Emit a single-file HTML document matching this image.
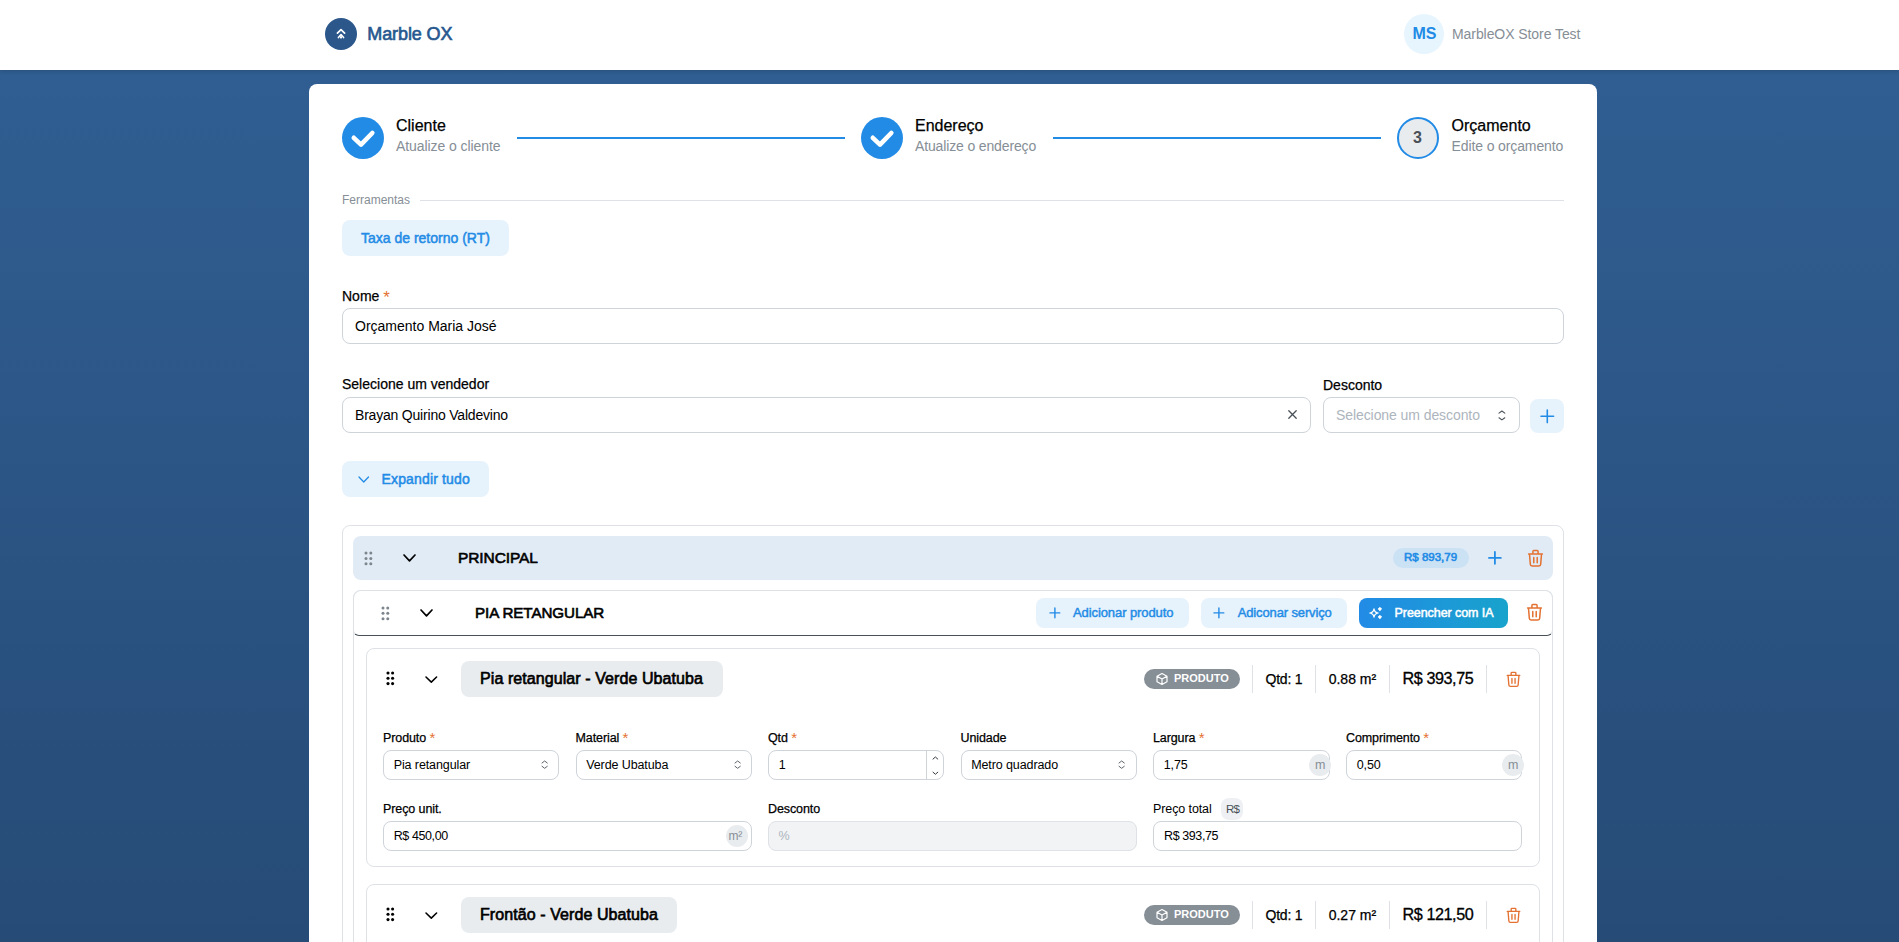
<!DOCTYPE html><html><head><meta charset="utf-8"><style>
html,body{margin:0;padding:0;}
body{width:1899px;height:942px;overflow:hidden;position:relative;font-family:"Liberation Sans",sans-serif;
background:linear-gradient(180deg,#305e92 0px,#305e92 70px,#264b76 942px);}
.t{position:absolute;white-space:nowrap;line-height:1;}
.b{position:absolute;display:block;}
</style></head><body>
<div class="b" style="left:0px;top:0px;width:1899px;height:70px;background:#fff;box-shadow:0 1px 4px rgba(0,0,0,0.18);"></div>
<div class="b" style="left:325px;top:18px;width:32px;height:32px;border-radius:50%;background:#2b578b;"></div>
<svg class="b" style="left:325px;top:18px;" width="32" height="32" viewBox="0 0 32 32" fill="none"><path d="M12.4 15.2 L16 11.6 L19.6 15.2" stroke="#fff" stroke-width="1.7" stroke-linecap="round" stroke-linejoin="round"/><path d="M13.4 19.6 L16 16.6 L18.6 19.6" stroke="#fff" stroke-width="1.6" stroke-linecap="round" stroke-linejoin="round"/><rect x="15" y="18.2" width="2" height="2.2" fill="#fff"/></svg>
<div class="t" style="left:367.30px;top:25.00px;font-size:18px;color:#27588f;letter-spacing:-0.1px;-webkit-text-stroke:0.65px #27588f;">Marble OX</div>
<div class="b" style="left:1404px;top:14px;width:40px;height:40px;border-radius:50%;background:#e7f5ff;"></div>
<div class="t" style="left:1412.50px;top:26.10px;font-size:16px;color:#228be6;font-weight:700;letter-spacing:-0.2px;">MS</div>
<div class="t" style="left:1452.00px;top:26.90px;font-size:14px;color:#868e96;letter-spacing:-0.07px;">MarbleOX Store Test</div>
<div class="b" style="left:309px;top:84px;width:1288px;height:900px;background:#fff;border-radius:8px;"></div>
<div class="b" style="left:342px;top:117px;width:42px;height:42px;border-radius:50%;background:#228be6;"></div>
<svg class="b" style="left:342px;top:117px;" width="42" height="42" viewBox="0 0 42 42" fill="none"><path d="M11.8 20.8 L19 27.6 L30.3 16" stroke="#fff" stroke-width="4.6" stroke-linecap="round" stroke-linejoin="round"/></svg>
<div class="t" style="left:396.00px;top:117.50px;font-size:16px;color:#000;-webkit-text-stroke:0.25px #000;">Cliente</div>
<div class="t" style="left:396.00px;top:139.00px;font-size:14px;color:#868e96;letter-spacing:-0.07px;">Atualize o cliente</div>
<div class="b" style="left:517px;top:137px;width:328px;height:2px;background:#228be6;"></div>
<div class="b" style="left:861px;top:117px;width:42px;height:42px;border-radius:50%;background:#228be6;"></div>
<svg class="b" style="left:861px;top:117px;" width="42" height="42" viewBox="0 0 42 42" fill="none"><path d="M11.8 20.8 L19 27.6 L30.3 16" stroke="#fff" stroke-width="4.6" stroke-linecap="round" stroke-linejoin="round"/></svg>
<div class="t" style="left:915.00px;top:117.50px;font-size:16px;color:#000;-webkit-text-stroke:0.25px #000;">Endereço</div>
<div class="t" style="left:915.00px;top:139.00px;font-size:14px;color:#868e96;letter-spacing:-0.14px;">Atualize o endereço</div>
<div class="b" style="left:1053px;top:137px;width:328px;height:2px;background:#228be6;"></div>
<div class="b" style="left:1397px;top:117px;width:42px;height:42px;box-sizing:border-box;border-radius:50%;border:2px solid #228be6;background:#e9ecef;"></div>
<div class="t" style="left:1413.00px;top:129.70px;font-size:16px;color:#495057;font-weight:700;">3</div>
<div class="t" style="left:1451.60px;top:117.50px;font-size:16px;color:#000;-webkit-text-stroke:0.25px #000;">Orçamento</div>
<div class="t" style="left:1451.60px;top:139.00px;font-size:14px;color:#868e96;letter-spacing:-0.12px;">Edite o orçamento</div>
<div class="t" style="left:342.00px;top:194.00px;font-size:12px;color:#868e96;">Ferramentas</div>
<div class="b" style="left:420px;top:200px;width:1144px;height:1px;background:#dee2e6;"></div>
<div class="b" style="left:342px;top:220px;width:167px;height:36px;background:#e7f3fc;border-radius:8px;"></div>
<div class="t" style="left:361.00px;top:231.00px;font-size:14px;color:#228be6;-webkit-text-stroke:0.5px #228be6;">Taxa de retorno (RT)</div>
<div class="t" style="left:342.00px;top:289.00px;font-size:14px;color:#000;-webkit-text-stroke:0.25px #000;">Nome <span style="color:#e47232;-webkit-text-stroke:0;font-size:17px;line-height:0;position:relative;top:2.3px">*</span></div>
<div class="b" style="left:342px;top:308px;width:1222px;height:36px;box-sizing:border-box;border:1px solid #ced4da;border-radius:8px;background:#fff;"></div>
<div class="t" style="left:355.00px;top:319.00px;font-size:14px;color:#000;">Orçamento Maria José</div>
<div class="t" style="left:342.00px;top:377.20px;font-size:14px;color:#000;-webkit-text-stroke:0.25px #000;">Selecione um vendedor</div>
<div class="b" style="left:342px;top:397px;width:969px;height:36px;box-sizing:border-box;border:1px solid #ced4da;border-radius:8px;background:#fff;"></div>
<div class="t" style="left:355.00px;top:407.70px;font-size:14px;color:#000;letter-spacing:-0.2px;">Brayan Quirino Valdevino</div>
<svg class="b" style="left:1286px;top:408px;" width="13" height="13" viewBox="0 0 13 13" fill="none"><path d="M2.8 2.8 L10.2 10.2 M10.2 2.8 L2.8 10.2" stroke="#495057" stroke-width="1.3" stroke-linecap="round"/></svg>
<div class="t" style="left:1323.00px;top:377.50px;font-size:14px;color:#000;-webkit-text-stroke:0.25px #000;">Desconto</div>
<div class="b" style="left:1323px;top:397px;width:197px;height:36px;box-sizing:border-box;border:1px solid #ced4da;border-radius:8px;background:#fff;"></div>
<div class="t" style="left:1336.00px;top:408.00px;font-size:14px;color:#adb5bd;letter-spacing:-0.08px;">Selecione um desconto</div>
<svg class="b" style="left:1497.3px;top:408.6px;" width="9.8" height="12.9" viewBox="0 0 9.8 12.9" fill="none"><path d="M2 4.1 L4.9 2 L7.8 4.1 M2 8.8 L4.9 10.9 L7.8 8.8" stroke="#495057" stroke-width="1.1" stroke-linecap="round" stroke-linejoin="round"/></svg>
<div class="b" style="left:1530px;top:399px;width:34px;height:34px;background:#e7f3fc;border-radius:8px;"></div>
<svg class="b" style="left:1539px;top:408px;" width="16.6" height="16.6" viewBox="0 0 16.6 16.6" fill="none"><path d="M8.3 2 V14.6 M2 8.3 H14.6" stroke="#228be6" stroke-width="1.6" stroke-linecap="round"/></svg>
<div class="b" style="left:342px;top:461px;width:147px;height:36px;background:#e7f3fc;border-radius:8px;"></div>
<svg class="b" style="left:356.5px;top:474.5px;" width="13.5" height="9" viewBox="0 0 13.5 9" fill="none"><path d="M2 2 L6.75 7 L11.5 2" stroke="#228be6" stroke-width="1.3" stroke-linecap="round" stroke-linejoin="round"/></svg>
<div class="t" style="left:381.50px;top:472.20px;font-size:14px;color:#228be6;letter-spacing:0.15px;-webkit-text-stroke:0.5px #228be6;">Expandir tudo</div>
<div class="b" style="left:342px;top:525px;width:1222px;height:600px;box-sizing:border-box;border:1px solid #dee2e6;border-radius:8px;"></div>
<div class="b" style="left:353px;top:536px;width:1200px;height:44px;background:#e0ebf5;border-radius:8px;"></div>
<svg class="b" style="left:363.5px;top:550.6px;" width="12" height="16" viewBox="0 0 12 16" fill="none"><circle cx="2.00" cy="2.00" r="1.5" fill="#7d858d"/><circle cx="2.00" cy="7.40" r="1.5" fill="#7d858d"/><circle cx="2.00" cy="12.80" r="1.5" fill="#7d858d"/><circle cx="6.80" cy="2.00" r="1.5" fill="#7d858d"/><circle cx="6.80" cy="7.40" r="1.5" fill="#7d858d"/><circle cx="6.80" cy="12.80" r="1.5" fill="#7d858d"/></svg>
<svg class="b" style="left:401.5px;top:553px;" width="15" height="9.8" viewBox="0 0 15 9.8" fill="none"><path d="M2 2 L7.5 7.8 L13 2" stroke="#000" stroke-width="1.7" stroke-linecap="round" stroke-linejoin="round"/></svg>
<div class="t" style="left:458.00px;top:549.75px;font-size:15.5px;color:#000;letter-spacing:-0.1px;-webkit-text-stroke:0.6px #000;">PRINCIPAL</div>
<div class="b" style="left:1393px;top:548px;width:76px;height:20px;background:#cbe1f4;border-radius:10px;"></div>
<div class="t" style="left:1404.00px;top:551.55px;font-size:11.5px;color:#228be6;-webkit-text-stroke:0.6px #228be6;">R$ 893,79</div>
<svg class="b" style="left:1487.2px;top:550px;" width="15.8" height="15.8" viewBox="0 0 15.8 15.8" fill="none"><path d="M7.9 2 V13.8 M2 7.9 H13.8" stroke="#228be6" stroke-width="1.8" stroke-linecap="round"/></svg>
<svg class="b" style="left:1524.7px;top:547.9166666666666px;" width="21.0" height="20.666666666666668" viewBox="0 0 24 24" fill="none"><g stroke="#e47232" stroke-width="1.75" stroke-linecap="round" stroke-linejoin="round"><path d="M4 7h16M10 11v6M14 11v6M5 7l1 12a2 2 0 0 0 2 2h8a2 2 0 0 0 2 -2l1 -12M9 7v-3a1 1 0 0 1 1 -1h4a1 1 0 0 1 1 1v3"/></g></svg>
<div class="b" style="left:353px;top:590px;width:1200px;height:600px;box-sizing:border-box;border:1px solid #dee2e6;border-radius:8px;"></div>
<div class="b" style="left:353px;top:590px;width:1200px;height:46px;box-sizing:border-box;border:1px solid #dee2e6;border-bottom:1px solid #495057;border-radius:8px 8px 6px 6px;background:#fff;"></div>
<svg class="b" style="left:380.6px;top:605.6px;" width="12" height="16" viewBox="0 0 12 16" fill="none"><circle cx="2.00" cy="2.00" r="1.5" fill="#7d858d"/><circle cx="2.00" cy="7.35" r="1.5" fill="#7d858d"/><circle cx="2.00" cy="12.70" r="1.5" fill="#7d858d"/><circle cx="6.75" cy="2.00" r="1.5" fill="#7d858d"/><circle cx="6.75" cy="7.35" r="1.5" fill="#7d858d"/><circle cx="6.75" cy="12.70" r="1.5" fill="#7d858d"/></svg>
<svg class="b" style="left:418.8px;top:608px;" width="15" height="9.8" viewBox="0 0 15 9.8" fill="none"><path d="M2 2 L7.5 7.8 L13 2" stroke="#000" stroke-width="1.7" stroke-linecap="round" stroke-linejoin="round"/></svg>
<div class="t" style="left:475.00px;top:604.90px;font-size:15.2px;color:#000;letter-spacing:-0.1px;-webkit-text-stroke:0.6px #000;">PIA RETANGULAR</div>
<div class="b" style="left:1036px;top:598px;width:153px;height:30px;background:#e7f3fc;border-radius:8px;"></div>
<svg class="b" style="left:1048px;top:606.2px;" width="13.8" height="13.8" viewBox="0 0 13.8 13.8" fill="none"><path d="M6.9 2 V11.8 M2 6.9 H11.8" stroke="#228be6" stroke-width="1.4" stroke-linecap="round"/></svg>
<div class="t" style="left:1073.00px;top:606.30px;font-size:13px;color:#228be6;letter-spacing:-0.09px;-webkit-text-stroke:0.45px #228be6;">Adicionar produto</div>
<div class="b" style="left:1201px;top:598px;width:146px;height:30px;background:#e7f3fc;border-radius:8px;"></div>
<svg class="b" style="left:1212px;top:606.2px;" width="13.8" height="13.8" viewBox="0 0 13.8 13.8" fill="none"><path d="M6.9 2 V11.8 M2 6.9 H11.8" stroke="#228be6" stroke-width="1.4" stroke-linecap="round"/></svg>
<div class="t" style="left:1237.70px;top:606.30px;font-size:13px;color:#228be6;letter-spacing:-0.13px;-webkit-text-stroke:0.45px #228be6;">Adiconar serviço</div>
<div class="b" style="left:1359px;top:598px;width:149px;height:30px;background:linear-gradient(90deg,#228be6,#18a3cc);border-radius:8px;"></div>
<svg class="b" style="left:1365px;top:600px;" width="30" height="26" viewBox="0 0 30 26" fill="none"><path d="M9 8.8 Q9.5 12.5 13.2 13 Q9.5 13.5 9 17.2 Q8.5 13.5 4.8 13 Q8.5 12.5 9 8.8Z" stroke="#fff" stroke-width="1.25" stroke-linejoin="round" fill="none"/><path d="M14.9 7.3 L16.6 9 L14.9 10.7 L13.2 9Z M14.9 15.3 L16.6 17 L14.9 18.7 L13.2 17Z" fill="#fff" stroke="#fff" stroke-width="0.9" stroke-linejoin="round"/></svg>
<div class="t" style="left:1394.60px;top:606.75px;font-size:12.5px;color:#fff;letter-spacing:-0.07px;-webkit-text-stroke:0.5px #fff;">Preencher com IA</div>
<svg class="b" style="left:1523.5px;top:602.4166666666666px;" width="21.0" height="20.666666666666668" viewBox="0 0 24 24" fill="none"><g stroke="#e47232" stroke-width="1.75" stroke-linecap="round" stroke-linejoin="round"><path d="M4 7h16M10 11v6M14 11v6M5 7l1 12a2 2 0 0 0 2 2h8a2 2 0 0 0 2 -2l1 -12M9 7v-3a1 1 0 0 1 1 -1h4a1 1 0 0 1 1 1v3"/></g></svg>
<div class="b" style="left:366px;top:648px;width:1174px;height:219px;box-sizing:border-box;border:1px solid #dee2e6;border-radius:8px;background:#fff;"></div>
<svg class="b" style="left:385.6px;top:671.4px;" width="12" height="16" viewBox="0 0 12 16" fill="none"><circle cx="2.00" cy="2.00" r="1.55" fill="#000"/><circle cx="2.00" cy="7.30" r="1.55" fill="#000"/><circle cx="2.00" cy="12.60" r="1.55" fill="#000"/><circle cx="6.60" cy="2.00" r="1.55" fill="#000"/><circle cx="6.60" cy="7.30" r="1.55" fill="#000"/><circle cx="6.60" cy="12.60" r="1.55" fill="#000"/></svg>
<svg class="b" style="left:424px;top:674.5px;" width="14.6" height="9.1" viewBox="0 0 14.6 9.1" fill="none"><path d="M2 2 L7.3 7.1 L12.6 2" stroke="#000" stroke-width="1.55" stroke-linecap="round" stroke-linejoin="round"/></svg>
<div class="b" style="left:461px;top:661px;width:262px;height:36px;background:#e9ecef;border-radius:8px;"></div>
<div class="t" style="left:480.00px;top:670.50px;font-size:16px;color:#000;letter-spacing:0.08px;-webkit-text-stroke:0.65px #000;">Pia retangular - Verde Ubatuba</div>
<div class="b" style="left:1144px;top:669px;width:96px;height:20px;background:#868e96;border-radius:10px;"></div>
<svg class="b" style="left:1155px;top:672px;" width="14" height="14" viewBox="0 0 14 14" fill="none"><g stroke="#fff" stroke-width="1.2" stroke-linejoin="round" stroke-linecap="round"><path d="M7 1.5 L12 4.2 V9.8 L7 12.5 L2 9.8 V4.2 Z M2 4.2 L7 7 L12 4.2 M7 7 V12.5"/></g></svg>
<div class="t" style="left:1174.00px;top:672.90px;font-size:11px;color:#fff;font-weight:700;">PRODUTO</div>
<div class="b" style="left:1252.2px;top:665px;width:1px;height:28px;background:#dee2e6;"></div>
<div class="b" style="left:1315.0px;top:665px;width:1px;height:28px;background:#dee2e6;"></div>
<div class="b" style="left:1389.2px;top:665px;width:1px;height:28px;background:#dee2e6;"></div>
<div class="b" style="left:1486.0px;top:665px;width:1px;height:28px;background:#dee2e6;"></div>
<div class="t" style="left:1265.60px;top:671.50px;font-size:14px;color:#000;letter-spacing:-0.25px;-webkit-text-stroke:0.25px #000;">Qtd: 1</div>
<div class="t" style="left:1328.70px;top:671.50px;font-size:14px;color:#000;-webkit-text-stroke:0.25px #000;">0.88 m²</div>
<div class="t" style="left:1402.60px;top:670.10px;font-size:16.2px;color:#000;letter-spacing:-0.45px;-webkit-text-stroke:0.3px #000;">R$ 393,75</div>
<svg class="b" style="left:1502.5px;top:670.0666666666666px;" width="21.0" height="18.666666666666668" viewBox="0 0 24 24" fill="none"><g stroke="#e47232" stroke-width="1.75" stroke-linecap="round" stroke-linejoin="round"><path d="M4 7h16M10 11v6M14 11v6M5 7l1 12a2 2 0 0 0 2 2h8a2 2 0 0 0 2 -2l1 -12M9 7v-3a1 1 0 0 1 1 -1h4a1 1 0 0 1 1 1v3"/></g></svg>
<div class="t" style="left:383.00px;top:732.05px;font-size:12.5px;color:#000;letter-spacing:-0.1px;-webkit-text-stroke:0.25px #000;">Produto <span style="color:#e47232;-webkit-text-stroke:0;font-size:15px;line-height:0;position:relative;top:1.2px">*</span></div>
<div class="b" style="left:383px;top:750px;width:176px;height:30px;box-sizing:border-box;border:1px solid #ced4da;border-radius:8px;background:#fff;"></div>
<div class="t" style="left:575.50px;top:732.05px;font-size:12.5px;color:#000;letter-spacing:-0.1px;-webkit-text-stroke:0.25px #000;">Material <span style="color:#e47232;-webkit-text-stroke:0;font-size:15px;line-height:0;position:relative;top:1.2px">*</span></div>
<div class="b" style="left:575.5px;top:750px;width:176.5px;height:30px;box-sizing:border-box;border:1px solid #ced4da;border-radius:8px;background:#fff;"></div>
<div class="t" style="left:768.00px;top:732.05px;font-size:12.5px;color:#000;letter-spacing:-0.1px;-webkit-text-stroke:0.25px #000;">Qtd <span style="color:#e47232;-webkit-text-stroke:0;font-size:15px;line-height:0;position:relative;top:1.2px">*</span></div>
<div class="b" style="left:768px;top:750px;width:175.5px;height:30px;box-sizing:border-box;border:1px solid #ced4da;border-radius:8px;background:#fff;"></div>
<div class="t" style="left:960.50px;top:732.05px;font-size:12.5px;color:#000;letter-spacing:-0.1px;-webkit-text-stroke:0.25px #000;">Unidade</div>
<div class="b" style="left:960.5px;top:750px;width:176.0px;height:30px;box-sizing:border-box;border:1px solid #ced4da;border-radius:8px;background:#fff;"></div>
<div class="t" style="left:1153.00px;top:732.05px;font-size:12.5px;color:#000;letter-spacing:-0.1px;-webkit-text-stroke:0.25px #000;">Largura <span style="color:#e47232;-webkit-text-stroke:0;font-size:15px;line-height:0;position:relative;top:1.2px">*</span></div>
<div class="b" style="left:1153px;top:750px;width:177px;height:30px;box-sizing:border-box;border:1px solid #ced4da;border-radius:8px;background:#fff;"></div>
<div class="t" style="left:1346.00px;top:732.05px;font-size:12.5px;color:#000;letter-spacing:-0.1px;-webkit-text-stroke:0.25px #000;">Comprimento <span style="color:#e47232;-webkit-text-stroke:0;font-size:15px;line-height:0;position:relative;top:1.2px">*</span></div>
<div class="b" style="left:1346px;top:750px;width:176px;height:30px;box-sizing:border-box;border:1px solid #ced4da;border-radius:8px;background:#fff;"></div>
<div class="t" style="left:393.70px;top:759.15px;font-size:12.5px;color:#000;letter-spacing:-0.1px;">Pia retangular</div>
<div class="t" style="left:586.20px;top:759.15px;font-size:12.5px;color:#000;letter-spacing:-0.1px;">Verde Ubatuba</div>
<div class="t" style="left:778.70px;top:759.15px;font-size:12.5px;color:#000;letter-spacing:-0.1px;">1</div>
<div class="t" style="left:971.20px;top:759.15px;font-size:12.5px;color:#000;letter-spacing:-0.1px;">Metro quadrado</div>
<div class="t" style="left:1163.70px;top:759.15px;font-size:12.5px;color:#000;letter-spacing:-0.1px;">1,75</div>
<div class="t" style="left:1356.70px;top:759.15px;font-size:12.5px;color:#000;letter-spacing:-0.1px;">0,50</div>
<svg class="b" style="left:539.8px;top:759.3px;" width="9.3" height="11.3" viewBox="0 0 9.3 11.3" fill="none"><path d="M2 4.0 L4.65 2 L7.3 4.0 M2 7.3 L4.65 9.3 L7.3 7.3" stroke="#5c636a" stroke-width="1.0" stroke-linecap="round" stroke-linejoin="round"/></svg>
<svg class="b" style="left:732.8px;top:759.3px;" width="9.3" height="11.3" viewBox="0 0 9.3 11.3" fill="none"><path d="M2 4.0 L4.65 2 L7.3 4.0 M2 7.3 L4.65 9.3 L7.3 7.3" stroke="#5c636a" stroke-width="1.0" stroke-linecap="round" stroke-linejoin="round"/></svg>
<svg class="b" style="left:1117.3px;top:759.3px;" width="9.3" height="11.3" viewBox="0 0 9.3 11.3" fill="none"><path d="M2 4.0 L4.65 2 L7.3 4.0 M2 7.3 L4.65 9.3 L7.3 7.3" stroke="#5c636a" stroke-width="1.0" stroke-linecap="round" stroke-linejoin="round"/></svg>
<div class="b" style="left:926px;top:751px;width:1px;height:28px;background:#ced4da;"></div>
<svg class="b" style="left:930.8px;top:754.5px;" width="8.8" height="21.3" viewBox="0 0 8.8 21.3" fill="none"><path d="M2 4.1 L4.4 2 L6.8 4.1 M2 17.2 L4.4 19.3 L6.8 17.2" stroke="#343a40" stroke-width="1.0" stroke-linecap="round" stroke-linejoin="round"/></svg>
<div class="b" style="left:1309px;top:754px;width:22px;height:22px;background:#e9ecef;border-radius:11px;"></div>
<div class="t" style="left:1315.00px;top:759.25px;font-size:12.5px;color:#868e96;">m</div>
<div class="b" style="left:1502px;top:754px;width:22px;height:22px;background:#e9ecef;border-radius:11px;"></div>
<div class="t" style="left:1508.00px;top:759.25px;font-size:12.5px;color:#868e96;">m</div>
<div class="t" style="left:383.00px;top:802.95px;font-size:12.5px;color:#000;letter-spacing:-0.1px;-webkit-text-stroke:0.25px #000;">Preço unit.</div>
<div class="b" style="left:383px;top:821px;width:369px;height:30px;box-sizing:border-box;border:1px solid #ced4da;border-radius:8px;background:#fff;"></div>
<div class="t" style="left:393.70px;top:829.75px;font-size:12.5px;color:#000;letter-spacing:-0.4px;">R$ 450,00</div>
<div class="b" style="left:726px;top:825px;width:22px;height:22px;background:#e9ecef;border-radius:11px;"></div>
<div class="t" style="left:728.50px;top:830.00px;font-size:12px;color:#868e96;letter-spacing:-0.3px;">m²</div>
<div class="t" style="left:768.00px;top:802.95px;font-size:12.5px;color:#000;letter-spacing:-0.1px;-webkit-text-stroke:0.25px #000;">Desconto</div>
<div class="b" style="left:768px;top:821px;width:368.5px;height:30px;box-sizing:border-box;border:1px solid #dee2e6;border-radius:8px;background:#f1f3f5;"></div>
<div class="t" style="left:778.60px;top:829.75px;font-size:12.5px;color:#adb5bd;">%</div>
<div class="t" style="left:1153.00px;top:802.95px;font-size:12.5px;color:#000;letter-spacing:-0.1px;">Preço total</div>
<div class="b" style="left:1221.3px;top:798.2px;width:21.5px;height:21.5px;background:#eef0f3;border-radius:8px;"></div>
<div class="t" style="left:1226.00px;top:803.85px;font-size:11.5px;color:#495057;letter-spacing:-0.9px;">R$</div>
<div class="b" style="left:1153px;top:821px;width:369px;height:30px;box-sizing:border-box;border:1px solid #ced4da;border-radius:8px;background:#fff;"></div>
<div class="t" style="left:1164.00px;top:829.75px;font-size:12.5px;color:#000;letter-spacing:-0.4px;">R$ 393,75</div>
<div class="b" style="left:366px;top:884px;width:1174px;height:400px;box-sizing:border-box;border:1px solid #dee2e6;border-radius:8px;background:#fff;"></div>
<svg class="b" style="left:385.6px;top:907.4px;" width="12" height="16" viewBox="0 0 12 16" fill="none"><circle cx="2.00" cy="2.00" r="1.55" fill="#000"/><circle cx="2.00" cy="7.30" r="1.55" fill="#000"/><circle cx="2.00" cy="12.60" r="1.55" fill="#000"/><circle cx="6.60" cy="2.00" r="1.55" fill="#000"/><circle cx="6.60" cy="7.30" r="1.55" fill="#000"/><circle cx="6.60" cy="12.60" r="1.55" fill="#000"/></svg>
<svg class="b" style="left:424px;top:910.5px;" width="14.6" height="9.1" viewBox="0 0 14.6 9.1" fill="none"><path d="M2 2 L7.3 7.1 L12.6 2" stroke="#000" stroke-width="1.55" stroke-linecap="round" stroke-linejoin="round"/></svg>
<div class="b" style="left:461px;top:897px;width:216px;height:36px;background:#e9ecef;border-radius:8px;"></div>
<div class="t" style="left:480.00px;top:906.50px;font-size:16px;color:#000;letter-spacing:0.08px;-webkit-text-stroke:0.65px #000;">Frontão - Verde Ubatuba</div>
<div class="b" style="left:1144px;top:905px;width:96px;height:20px;background:#868e96;border-radius:10px;"></div>
<svg class="b" style="left:1155px;top:908px;" width="14" height="14" viewBox="0 0 14 14" fill="none"><g stroke="#fff" stroke-width="1.2" stroke-linejoin="round" stroke-linecap="round"><path d="M7 1.5 L12 4.2 V9.8 L7 12.5 L2 9.8 V4.2 Z M2 4.2 L7 7 L12 4.2 M7 7 V12.5"/></g></svg>
<div class="t" style="left:1174.00px;top:908.90px;font-size:11px;color:#fff;font-weight:700;">PRODUTO</div>
<div class="b" style="left:1252.2px;top:901px;width:1px;height:28px;background:#dee2e6;"></div>
<div class="b" style="left:1315.0px;top:901px;width:1px;height:28px;background:#dee2e6;"></div>
<div class="b" style="left:1389.2px;top:901px;width:1px;height:28px;background:#dee2e6;"></div>
<div class="b" style="left:1486.0px;top:901px;width:1px;height:28px;background:#dee2e6;"></div>
<div class="t" style="left:1265.60px;top:907.50px;font-size:14px;color:#000;letter-spacing:-0.25px;-webkit-text-stroke:0.25px #000;">Qtd: 1</div>
<div class="t" style="left:1328.70px;top:907.50px;font-size:14px;color:#000;-webkit-text-stroke:0.25px #000;">0.27 m²</div>
<div class="t" style="left:1402.60px;top:906.10px;font-size:16.2px;color:#000;letter-spacing:-0.45px;-webkit-text-stroke:0.3px #000;">R$ 121,50</div>
<svg class="b" style="left:1502.5px;top:906.0666666666666px;" width="21.0" height="18.666666666666668" viewBox="0 0 24 24" fill="none"><g stroke="#e47232" stroke-width="1.75" stroke-linecap="round" stroke-linejoin="round"><path d="M4 7h16M10 11v6M14 11v6M5 7l1 12a2 2 0 0 0 2 2h8a2 2 0 0 0 2 -2l1 -12M9 7v-3a1 1 0 0 1 1 -1h4a1 1 0 0 1 1 1v3"/></g></svg>
</body></html>
